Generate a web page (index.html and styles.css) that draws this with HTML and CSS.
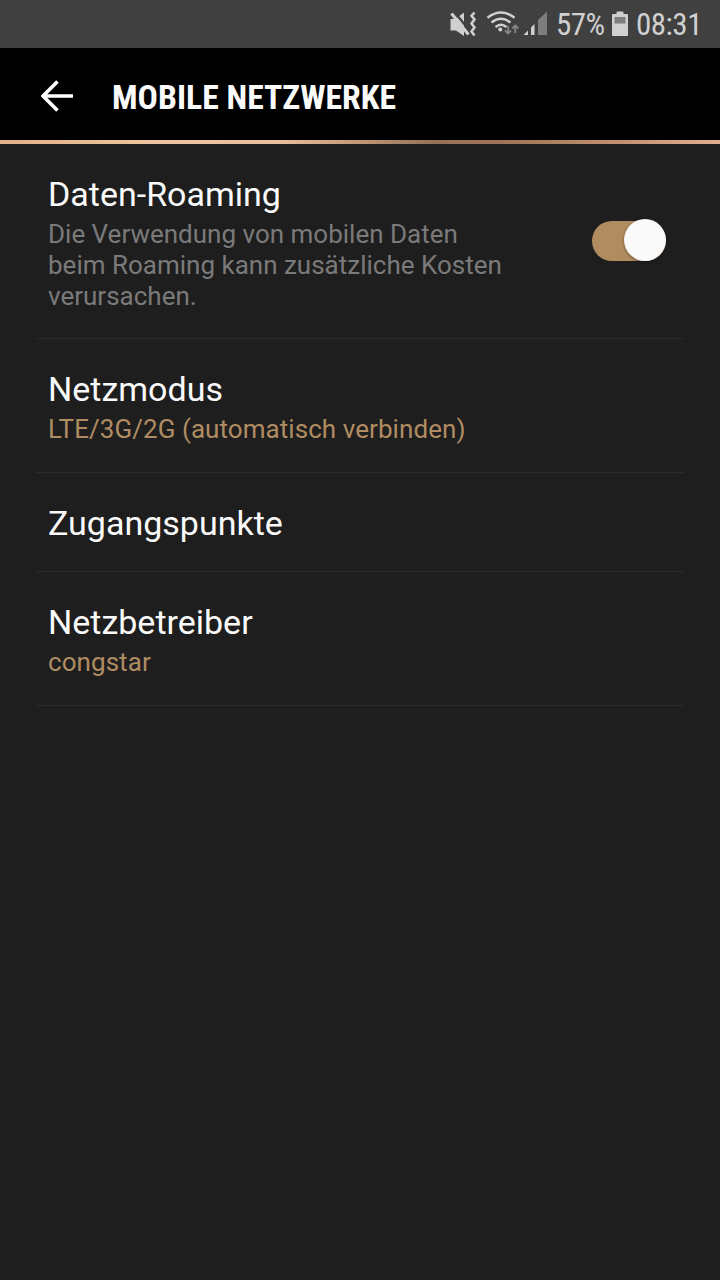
FILE: index.html
```html
<!DOCTYPE html>
<html lang="de">
<head>
    <meta charset="utf-8">
    <title>Mobile Netzwerke</title>
    <link rel="stylesheet" href="styles.css">
</head>
<body>
    <div class="status-bar">
        <svg class="status-icons" width="100" height="48" viewBox="0 0 100 48">
            <!-- mute / vibrate -->
            <path d="M2.500 19h5L16 12.500V36l-8-5.500H2.500z" fill="#d0d0d0"/>
            <path d="M6.500 12L19 27.500" stroke="#404040" stroke-width="2.200"/>
            <path d="M3.500 13.500L20.500 34.500" stroke="#d0d0d0" stroke-width="3"/>
            <path d="M26.500 12.500l-3 3.300 3 3.700-3 4 3 4-3 4 3 4" fill="none" stroke="#d0d0d0" stroke-width="2.500"/>
            <!-- wifi -->
            <g fill="none" stroke="#d0d0d0" stroke-width="2.400">
                <path d="M39.500 17.700q13.500-10.500 27 0"/>
                <path d="M43.500 22.500q9.500-7.500 19 0"/>
                <path d="M47.500 27q5.500-4.500 11 0"/>
            </g>
            <circle cx="52.300" cy="29.500" r="2" fill="#d0d0d0"/>
            <path d="M60 26v7.500M57 30.500l3 3 3-3M67.300 33v-7.500M64.300 28.500l3-3 3 3" fill="none" stroke="#858585" stroke-width="1.800"/>
            <!-- signal -->
            <path d="M75.500 35l4.500-4.500V35zM83 35v-7.500l3.500-3.500v11z" fill="#d0d0d0"/>
            <path d="M90 35V20l9-8.500V35z" fill="#7d7d7d"/>
        </svg>
        <span class="battery-level">57%</span>
        <svg class="battery" width="16" height="26" viewBox="0 0 16 26">
            <path d="M1 3h3.500V1.500Q4.500.500 5.500.500h5q1 0 1 1V3H15q1 0 1 1v20q0 1-1 1H1q-1 0-1-1V4q0-1 1-1z" fill="#d0d0d0"/>
            <path d="M2.500 6h11v6.500h-11z" fill="#7d7d7d"/>
        </svg>
        <span class="clock">08:31</span>
    </div>

    <header class="app-bar">
        <svg class="back" width="32" height="32" viewBox="0 0 32 32">
            <path d="M16.500 1.500L2 16l14.500 14.500M2 16h30" fill="none" stroke="#fff" stroke-width="3.700"/>
        </svg>
        <h1>MOBILE NETZWERKE</h1>
    </header>

    <main class="settings">
        <div class="item item-switch">
            <div class="item-text">
                <h2>Daten-Roaming</h2>
                <p class="hint">Die Verwendung von mobilen Daten<br>beim Roaming kann zusätzliche Kosten<br>verursachen.</p>
            </div>
            <div class="switch"><div class="knob"></div></div>
        </div>
        <div class="item">
            <h2>Netzmodus</h2>
            <p>LTE/3G/2G (automatisch verbinden)</p>
        </div>
        <div class="item">
            <h2>Zugangspunkte</h2>
        </div>
        <div class="item">
            <h2>Netzbetreiber</h2>
            <p>congstar</p>
        </div>
    </main>
</body>
</html>
```
FILE: styles.css
```css
body {
    margin: 0;
    min-height: 1280px;
    background-color: #1e1e1e;
    color: #fafafa;
    font-family: Roboto, sans-serif;
}

h1, h2, p {
    margin: 0;
    font-weight: 400;
    white-space: nowrap;
}

.status-bar {
    display: flex;
    align-items: center;
    height: 48px;
    padding-left: 448px;
    background-color: #404040;
    color: #d0d0d0;
    font-family: "Roboto Condensed", Roboto, sans-serif;
    font-stretch: 75%;
    font-size: 31px;
    letter-spacing: -0.5px;
}

.battery-level {
    width: 48px;
    margin: 1px 0 0 8px;
}

.battery {
    margin-left: 8px;
}

.clock {
    margin: 1px 0 0 8px;
}

.status-icons, .battery, .back {
    flex: none;
}

.app-bar {
    display: flex;
    align-items: center;
    box-sizing: border-box;
    height: 96px;
    padding: 4px 0 0 41px;
    border-bottom: 4px solid;
    border-image: linear-gradient(to right, #e2b08a, #ecc6a0 22%, #e6c09a 39%, #987257 60%, #9d7558 70%, #c08f70 85%, #e4ae8d) 1;
    background-color: #000;
}

.app-bar h1 {
    margin: 2px 0 0 39px;
    font-family: "Roboto Condensed", Roboto, sans-serif;
    font-stretch: 75%;
    font-size: 33.75px;
    font-weight: 700;
}

.settings {
    padding: 0 36px;
}

.item {
    padding: 30px 12px 27px;
    border-bottom: 1px solid #2a2a2a;
}

.item h2 {
    padding-bottom: 1px;
    font-size: 34px;
    line-height: 40px;
}

.item p {
    margin-top: 4px;
    color: #b08c63;
    font-size: 26px;
    line-height: 31px;
    letter-spacing: 0.06px;
}

.item .hint {
    color: #7a7a7a;
    letter-spacing: 0;
}

.item-switch {
    display: flex;
    justify-content: space-between;
    align-items: flex-start;
    height: 137px;
    padding-right: 18px;
}

.switch {
    display: flex;
    justify-content: flex-end;
    align-items: center;
    width: 74px;
    height: 40px;
    margin-top: 47px;
    border-radius: 20px;
    background-color: #b08c60;
}

.knob {
    flex: none;
    width: 42px;
    height: 42px;
    margin-top: -2px;
    border-radius: 50%;
    background-color: #fafafa;
    box-shadow: 0 1px 3px rgba(0, 0, 0, 0.4);
}
```
